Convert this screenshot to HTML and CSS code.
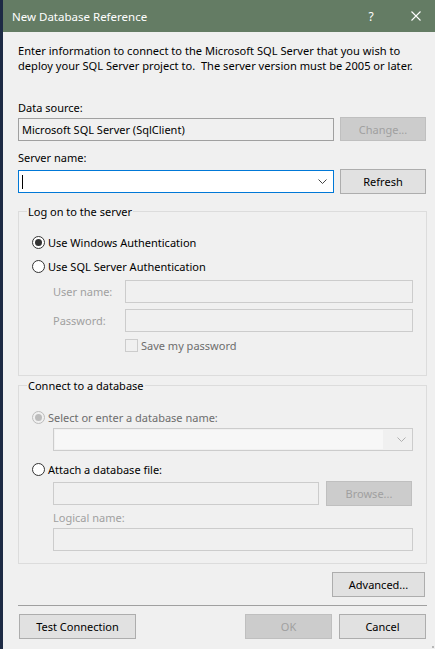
FILE: index.html
```html
<!DOCTYPE html>
<html>
<head>
<meta charset="utf-8">
<link rel="stylesheet" href="styles.css">
</head>
<body>
<div class="window">
  <div class="titlebar">
    <span class="title">New Database Reference</span>
    <span class="help">?</span>
    <svg class="close" width="10" height="10" viewBox="0 0 10 10"><path d="M0.5 0.5L9.5 9.5M9.5 0.5L0.5 9.5" stroke="#ffffff" stroke-width="1.1" fill="none"/></svg>
  </div>
  <div class="content">
    <p class="intro">Enter information to connect to the Microsoft SQL Server that you wish to<br>deploy your SQL Server project to.&nbsp; The server version must be 2005 or later.</p>

    <div class="label ds-label">Data source:</div>
    <div class="row row-ds">
      <div class="textbox readonly">Microsoft SQL Server (SqlClient)</div>
      <div class="btn disabled">Change...</div>
    </div>

    <div class="label sn-label">Server name:</div>
    <div class="row row-sn">
      <div class="combo focused">
        <span class="caret"></span>
        <svg class="chev" width="9" height="5" viewBox="0 0 9 5"><path d="M0.5 0.5L4.5 4.5L8.5 0.5" stroke="#444" stroke-width="1" fill="none"/></svg>
      </div>
      <div class="btn">Refresh</div>
    </div>

    <div class="group g1">
      <div class="group-title">Log on to the server</div>
      <div class="radio r-win"><span class="rc checked"></span><span>Use Windows Authentication</span></div>
      <div class="radio r-sql"><span class="rc"></span><span>Use SQL Server Authentication</span></div>
      <div class="field f-user"><span class="flabel">User name:</span><div class="textbox disabled"></div></div>
      <div class="field f-pass"><span class="flabel">Password:</span><div class="textbox disabled"></div></div>
      <div class="check"><span class="cb"></span><span>Save my password</span></div>
    </div>

    <div class="group g2">
      <div class="group-title">Connect to a database</div>
      <div class="radio dis r-sel"><span class="rc checked dis"></span><span>Select or enter a database name:</span></div>
      <div class="combo disabled c-db">
        <div class="combo-inner"></div>
        <svg class="chev" width="9" height="5" viewBox="0 0 9 5"><path d="M0.5 0.5L4.5 4.5L8.5 0.5" stroke="#b0b0b0" stroke-width="1" fill="none"/></svg>
      </div>
      <div class="radio r-att"><span class="rc"></span><span>Attach a database file:</span></div>
      <div class="row row-file">
        <div class="textbox disabled"></div>
        <div class="btn disabled">Browse...</div>
      </div>
      <div class="flabel l-logical">Logical name:</div>
      <div class="textbox disabled t-logical"></div>
    </div>

    <div class="adv-row"><div class="btn btn-adv">Advanced...</div></div>
    <div class="sep"></div>
    <div class="bottom-row">
      <div class="btn btn-test">Test Connection</div>
      <div class="bottom-right">
        <div class="btn disabled btn-ok">OK</div>
        <div class="btn btn-cancel">Cancel</div>
      </div>
    </div>
  </div>
  <span class="grip"></span>
</div>
</body>
</html>
```
FILE: styles.css
```css
* { box-sizing: border-box; }
html, body { margin: 0; padding: 0; }
body {
  background: #1d2a44;
  width: 435px;
  height: 649px;
  overflow: hidden;
  font-family: "Noto Sans", "Open Sans", sans-serif;
  font-size: 11px;
  color: #000;
}
.window {
  margin-left: 3px;
  width: 432px;
  height: 649px;
  background: #f0f0f0;
  position: relative;
}
.titlebar {
  height: 32px;
  background: #647c64;
  display: flex;
  align-items: center;
  padding-left: 9px;
  color: #ffffff;
}
.title { flex: 1; line-height: 15px; font-size: 11.5px; }
.help { width: 14px; margin-right: 33px; text-align: center; font-size: 12px; }
.close { margin-right: 14px; }

.content {
  padding: 0 8px 0 15px;
  display: flex;
  flex-direction: column;
}
.intro {
  margin: 11px 0 0 0;
  line-height: 15px;
  white-space: nowrap;
  font-size: 11.1px;
}
.label { line-height: 15px; white-space: nowrap; }
.ds-label { margin-top: 27px; }
.sn-label { margin-top: 9px; }

.row { display: flex; align-items: center; gap: 6px; margin-right: 1px; }
.row-ds { margin-top: 2px; height: 24px; }
.row-sn { margin-top: 4px; height: 25px; }
.row-ds .textbox, .row-sn .combo { flex: 1; }

.textbox {
  height: 23px;
  border: 1px solid #7a7a7a;
  background: #ffffff;
  padding-left: 3px;
  line-height: 21px;
  white-space: nowrap;
}
.textbox.readonly { background: #f0f0f0; border-color: #a0a0a0; height: 23px; }
.textbox.disabled { background: #f0f0f0; border-color: #cccccc; }

.btn {
  width: 86px;
  height: 24px;
  border: 1px solid #adadad;
  background: #e1e1e1;
  display: flex;
  align-items: center;
  justify-content: center;
  line-height: 15px;
  flex: none;
  white-space: nowrap;
}
.row-sn .btn { height: 25px; }
.btn.disabled { background: #cccccc; border-color: #bfbfbf; color: #a0a0a0; }

.combo {
  height: 23px;
  border: 1px solid #7a7a7a;
  background: #ffffff;
  display: flex;
  align-items: center;
  position: relative;
}
.combo.focused { border-color: #0078d7; }
.caret { width: 1px; height: 14px; background: #000; margin-left: 3px; }
.combo .chev { margin-left: auto; margin-right: 6px; }
.combo.disabled { background: #f0f0f0; border-color: #cccccc; padding: 1px; align-items: stretch; }
.combo-inner { flex: 1; background: #f7f7f7; margin-right: 14px; }
.combo.disabled .chev { align-self: center; margin-left: 0; margin-right: 5px; }

.group {
  border: 1px solid #dcdcdc;
  display: flex;
  flex-direction: column;
}
.group-title {
  margin-top: -8px;
  margin-left: 8px;
  padding: 0 1px;
  background: #f0f0f0;
  line-height: 15px;
  align-self: flex-start;
  white-space: nowrap;
}
.g1 { margin-top: 17px; padding-bottom: 22px; }
.g2 { margin-top: 9px; padding-bottom: 12px; }

.radio { display: flex; align-items: center; height: 15px; padding-left: 13px; line-height: 15px; white-space: nowrap; }
.rc {
  width: 13px; height: 13px;
  border: 1px solid #333333;
  border-radius: 50%;
  background: #ffffff;
  margin-right: 3px;
  display: flex; align-items: center; justify-content: center;
  flex: none;
}
.rc.checked::after {
  content: "";
  width: 7px; height: 7px;
  border-radius: 50%;
  background: #333333;
}
.rc.dis { border-color: #bcbcbc; background: #f0f0f0; }
.rc.dis::after { background: #bcbcbc; }
.radio.dis { color: #6d6d6d; }
.r-win { margin-top: 16px; }
.r-sql { margin-top: 9px; }
.r-sel { margin-top: 17px; }
.r-att { margin-top: 11px; }

.field { display: flex; align-items: center; margin-left: 34px; margin-right: 13px; height: 23px; }
.field .textbox { flex: 1; }
.flabel { color: #a0a0a0; width: 72px; line-height: 15px; white-space: nowrap; flex: none; }
.f-user { margin-top: 6px; }
.f-pass { margin-top: 6px; }

.check { display: flex; align-items: center; margin-left: 106px; margin-top: 6px; height: 15px; color: #6d6d6d; white-space: nowrap; }
.cb { width: 13px; height: 13px; border: 1px solid #cccccc; background: #f0f0f0; margin-right: 3px; flex: none; }

.c-db { margin: 3px 13px 0 34px; }
.row-file { margin: 4px 14px 0 34px; gap: 7px; height: 25px; }
.row-file .textbox { flex: 1; }
.row-file .btn { height: 25px; }
.l-logical { margin: 4px 0 0 34px; width: auto; }
.t-logical { margin: 3px 13px 0 34px; }

.adv-row { display: flex; justify-content: flex-end; margin-top: 8px; margin-right: 2px; }
.btn-adv { width: 93px; height: 25px; }
.sep { margin-top: 8px; height: 1px; background: #a0a0a0; }
.bottom-row { display: flex; justify-content: space-between; margin-top: 8px; padding: 0 1px; }
.bottom-right { display: flex; gap: 7px; }
.btn-test { width: 117px; height: 25px; }
.btn-ok, .btn-cancel { width: 87px; height: 25px; }
.grip {
  position: absolute; right: 1px; bottom: 1px;
  width: 2px; height: 2px; background: #b8b8b8;
}
```
